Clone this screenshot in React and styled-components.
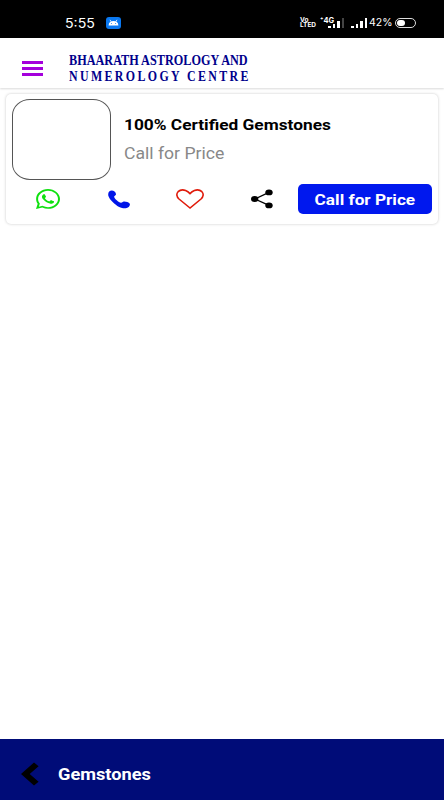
import React from 'react'
import styled, { createGlobalStyle } from 'styled-components'
import { FaWhatsapp } from 'react-icons/fa'

const App = () => {
    return (
    <Screen>
        <GlobalStyle />
        <StatusBar>
            <Clock><Stretch $scale={1.09}>5:55</Stretch></Clock>
            <AndroidBadge>
                <svg width="15" height="12" viewBox="0 0 15 12">
                    <path d="M2.600 8.400C2.800 5.200 4.800 4 7.500 4s4.700 1.200 4.900 4.400z" fill="#fff" />
                    <path d="M4 2.800l1.200 2M11 2.800l-1.200 2" stroke="#fff" strokeWidth="0.800" />
                    <circle cx="5.400" cy="6.500" r="0.500" fill="#0a78f0" />
                    <circle cx="9.600" cy="6.500" r="0.500" fill="#0a78f0" />
                </svg>
            </AndroidBadge>
            <StatusRight>
                <Volte>Vo<br />LTED</Volte>
                <Network>
                    <NetworkLabel>⁺4G</NetworkLabel>
                    <Signal last="#444" />
                </Network>
                <Signal last="#fff" />
                <Percent>42%</Percent>
                <Battery><i /></Battery>
            </StatusRight>
        </StatusBar>

        <Header>
            <Menu><i /><i /><i /></Menu>
            <Brand>
                <BrandLine $spacing="0px" $scale={0.815}>BHAARATH ASTROLOGY AND</BrandLine>
                <BrandLine $spacing="3px" $scale={0.793}>NUMEROLOGY CENTRE</BrandLine>
            </Brand>
        </Header>

        <Content>
            <Card>
                <Info>
                    <Thumb />
                    <Details>
                        <Name><Stretch $scale={1.235}>100% Certified Gemstones</Stretch></Name>
                        <Price><Stretch $scale={1.1}>Call for Price</Stretch></Price>
                    </Details>
                </Info>
                <Actions>
                    <Action>
                        <FaWhatsapp viewBox="0 32 448 448" preserveAspectRatio="none" color="#0fe00f" />
                    </Action>
                    <Action>
                        <Phone viewBox="0 0 22 18">
                            <path d="M1.200 1.100C2.600-.3 5.200-.1 6.500 1.100c1 .9 1.700 2.200 1.400 3.200-.4 1-1.700 1.200-1.800 2 .3 2 4.500 5.500 6.900 6 1.100.1 1.500-1.200 2.900-1.300 1.900-.1 5 .8 5.900 2.300.6 1.600-1 3.700-3.200 4.300-2.300.6-6.200-.2-9.300-2.200C5.700 13 1.600 9 .4 5.600 0 4 .1 2.200 1.200 1.100z" />
                        </Phone>
                    </Action>
                    <Action>
                        <Heart viewBox="0 0 28 20">
                            <path d="M14 19L3 10C.4 7.600.2 4.600 2.100 2.700 4 .9 7.300.6 9.600 1.500c1.800.7 3.200 1.800 4.400 3.100 1.200-1.300 2.600-2.400 4.400-3.100 2.300-.9 5.600-.6 7.500 1.200 1.900 1.900 1.700 4.900-.9 7.300z" />
                        </Heart>
                    </Action>
                    <Action>
                        <svg width="22" height="20" viewBox="0 0 22 20">
                            <path d="M18 3.300L4 10l14 6.300" fill="none" stroke="#000" strokeWidth="1.300" />
                            <ellipse cx="3.700" cy="10" rx="3.700" ry="2.900" />
                            <ellipse cx="18" cy="3.400" rx="3.700" ry="2.900" />
                            <ellipse cx="18" cy="16.400" rx="3.700" ry="2.900" />
                        </svg>
                    </Action>
                    <CallButton><Stretch $scale={1.23} $center>Call for Price</Stretch></CallButton>
                </Actions>
            </Card>
        </Content>

        <Footer>
            <svg width="18" height="24" viewBox="0 0 18 24">
                <path d="M13 .6L0 12l13 11.400 4.600-3.600L8.700 12l8.900-7.800z" />
            </svg>
            <FooterTitle><Stretch $scale={1.07}>Gemstones</Stretch></FooterTitle>
        </Footer>
    </Screen>
  )
}

const Signal = ({ last }) => (
    <Bars>
        <Bar $h={2} $color="#fff" />
        <Bar $h={4} $color="#fff" />
        <Bar $h={7} $color="#fff" />
        <Bar $h={10} $color={last} />
    </Bars>
)

export default App

const GlobalStyle = createGlobalStyle`
    * {
        box-sizing: border-box;
    }

    body {
        margin: 0;
        background: #fff;
        font-family: Roboto, sans-serif;
    }

    svg {
        display: block;
    }
`

const Screen = styled.div`
    width: 444px;
    height: 800px;
    display: flex;
    flex-direction: column;
    background: #fff;
    overflow: hidden;
`

const Stretch = styled.span`
    display: inline-block;
    white-space: nowrap;
    transform: scaleX(${(p) => p.$scale});
    transform-origin: ${(p) => (p.$center ? 'center' : 'left')};
`

const StatusBar = styled.div`
    height: 38px;
    flex: none;
    display: flex;
    align-items: center;
    padding: 8px 28px 0 65px;
    background: #000;
    color: #fff;
`

const Clock = styled.div`
    width: 41px;
    font: 13px/16px Inter, sans-serif;
`

const AndroidBadge = styled.div`
    width: 15px;
    height: 12px;
    border-radius: 3px;
    background: #0a78f0;
`

const StatusRight = styled.div`
    margin-left: auto;
    display: flex;
    align-items: center;
`

const Volte = styled.div`
    width: 21px;
    font: bold 6.500px/5.500px Inter, sans-serif;
`

const Network = styled.div`
    width: 30px;
    height: 10px;
    display: flex;
    justify-content: flex-end;
    padding-right: 7px;
    position: relative;
`

const NetworkLabel = styled.span`
    position: absolute;
    left: -1px;
    top: -1px;
    font: bold 7.500px/7px Inter, sans-serif;
    text-shadow: 0 0 1px #000;
`

const Bars = styled.div`
    display: flex;
    align-items: flex-end;
    gap: 2px;
    height: 10px;
`

const Bar = styled.i`
    width: 2.500px;
    height: ${(p) => p.$h}px;
    background: ${(p) => p.$color};
`

const Percent = styled.div`
    width: 26px;
    margin-left: 2px;
    font: 10.500px/12px Inter, sans-serif;
`

const Battery = styled.div`
    width: 21px;
    height: 10px;
    padding: 1px;
    border: 1px solid #ddd;
    border-radius: 5px;

    i {
        display: block;
        width: 8px;
        height: 6px;
        border-radius: 3px;
        background: #fff;
    }
`

const Header = styled.div`
    height: 50px;
    flex: none;
    display: flex;
    padding: 15px 22px 0;
    background: #fff;
    box-shadow: 0 1px 2px rgba(0, 0, 0, 0.15);
`

const Menu = styled.div`
    width: 47px;
    padding-top: 8px;
    display: flex;
    flex-direction: column;
    gap: 3.200px;

    i {
        width: 21px;
        height: 2.800px;
        background: #a400dc;
    }
`

const Brand = styled.div`
    color: #00008b;
`

const BrandLine = styled.div`
    font: bold 15px/15.500px 'Liberation Serif', serif;
    letter-spacing: ${(p) => p.$spacing};
    white-space: nowrap;
    transform: scaleX(${(p) => p.$scale});
    transform-origin: left;
`

const Content = styled.div`
    flex: 1;
    padding: 6px;
`

const Card = styled.div`
    height: 130px;
    padding: 5px 0 0 6px;
    border-radius: 5px;
    background: #fff;
    box-shadow: 0 0 3px rgba(0, 0, 0, 0.22);
`

const Info = styled.div`
    display: flex;
    gap: 12.500px;
`

const Thumb = styled.div`
    width: 99px;
    height: 81px;
    border: 1px solid #555;
    border-radius: 18px / 16px;
`

const Details = styled.div`
    padding-top: 16px;
`

const Name = styled.div`
    font-size: 14px;
    line-height: 20px;
    font-weight: 700;
    color: #000;
`

const Price = styled.div`
    margin-top: 9px;
    font-size: 16px;
    line-height: 20px;
    color: #888;
`

const Actions = styled.div`
    display: flex;
    align-items: center;
    height: 30px;
    margin-top: 4.400px;
`

const Action = styled.div`
    width: 71.400px;
    display: flex;
    justify-content: center;

    svg {
        width: 24px;
        height: 20px;
    }
`

const Phone = styled.svg`
    && {
        width: 22px;
        height: 19px;
    }
    fill: #0015e8;
`

const Heart = styled.svg`
    && {
        width: 28px;
        height: 20px;
    }
    fill: none;
    stroke: #e01a0a;
    stroke-width: 1.600;
`

const CallButton = styled.button`
    width: 134px;
    height: 30px;
    padding: 2px 0 0;
    border: 0;
    border-radius: 5px;
    background: #0018ee;
    color: #fff;
    font: bold 14px/28px Roboto, sans-serif;
`

const Footer = styled.div`
    height: 61px;
    flex: none;
    display: flex;
    align-items: center;
    padding: 9px 21px 0;
    gap: 19px;
    background: #000c78;
`

const FooterTitle = styled.div`
    font-size: 17px;
    font-weight: 700;
    color: #fff;
`
